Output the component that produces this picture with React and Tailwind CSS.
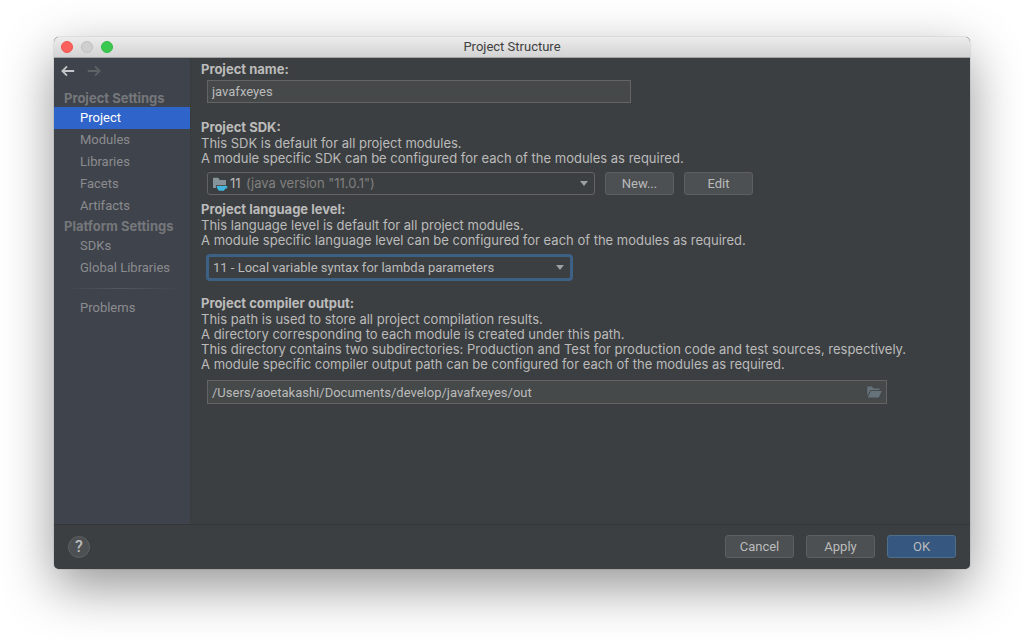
import React, { useState } from 'react';
import clsx from 'clsx';

const PROJECT_SETTINGS = ['Project', 'Modules', 'Libraries', 'Facets', 'Artifacts'];
const PLATFORM_SETTINGS = ['SDKs', 'Global Libraries'];

const ArrowIcon = ({ className }) => (
  <svg viewBox="0 0 14 12" className={clsx('h-3 w-3.5', className)} fill="none" stroke="currentColor" strokeWidth="1.8">
    <path d="M13.2 6H1.8M6 1.4 1.4 6 6 10.6" />
  </svg>
);

const ChevronIcon = ({ className }) => (
  <svg viewBox="0 0 8 5" className={clsx('pointer-events-none absolute h-[5px] w-2', className)} fill="#9da0a3">
    <path d="M0 0h8L4 5z" />
  </svg>
);

const SdkIcon = ({ className }) => (
  <svg viewBox="0 0 16 14" className={clsx('pointer-events-none absolute h-3.5 w-4', className)}>
    <path d="M1 .8h5.2L7.8 3H14v5.2H4V11H1z" fill="#87939a" />
    <path d="M4.6 9h10.6v2.6h-1.8c-.4.9-1 1.6-1.7 2.2H7.4C5.8 12.8 4.7 11.2 4.6 9z" fill="#40b6e0" />
  </svg>
);

const FolderOpenIcon = () => (
  <svg viewBox="0 0 15 12" className="h-3 w-[15px]" fill="#65727a">
    <path d="M.3 10V.6h4.6l1.6 1.8h6V4H3.4z" />
    <path d="M3.8 5h10.9l-2.900 6.400H.8z" />
  </svg>
);

const Button = ({ children, primary }) => (
  <button
    type="button"
    className={clsx(
      'h-[23px] w-[69px] rounded-[3px] border text-center leading-[15px]',
      primary ? 'border-[#4c708c] bg-[#365880]' : 'border-[#5e6060] bg-[#4c5052]'
    )}
  >
    {children}
  </button>
);

const NavItem = ({ name, active, onSelect }) => (
  <button
    type="button"
    onClick={() => onSelect(name)}
    className={clsx(
      'block h-[22px] w-full pl-[26px] text-left leading-[22px]',
      active ? 'bg-[#2f65ca] text-white' : 'text-[#8b8c8e]'
    )}
  >
    {name}
  </button>
);

const NavHeading = ({ children }) => (
  <h2 className="pl-2.5 font-['Inter',sans-serif] leading-[18px] font-bold text-[#75777a]">{children}</h2>
);

const Sidebar = () => {
  const [selected, setSelected] = useState('Project');

  const renderItem = (name) => (
    <NavItem key={name} name={name} active={selected === name} onSelect={setSelected} />
  );

  return (
    <nav className="w-[137px] shrink-0 border-r border-[#393b3d] bg-[#3f434c]">
      <div className="flex gap-3 px-[7px] pt-[7px] pb-3">
        <button type="button" aria-label="Back" className="text-[#c4c6c8]">
          <ArrowIcon />
        </button>
        <button type="button" aria-label="Forward" className="text-[#5f6266]">
          <ArrowIcon className="rotate-180" />
        </button>
      </div>
      <NavHeading>Project Settings</NavHeading>
      {PROJECT_SETTINGS.map(renderItem)}
      <NavHeading>Platform Settings</NavHeading>
      {PLATFORM_SETTINGS.map(renderItem)}
      <hr className="mx-2.5 mt-[9px] mb-2 h-px border-0 bg-linear-to-r from-transparent via-[#54575c] to-transparent" />
      {renderItem('Problems')}
    </nav>
  );
};

const FieldLabel = ({ htmlFor, children }) => (
  <label htmlFor={htmlFor} className="block font-['Inter',sans-serif] leading-[17px] font-bold">
    {children}
  </label>
);

const Description = ({ lines }) => (
  <div className="font-['Inter',sans-serif]">
    {lines.map((line) => (
      <p key={line}>{line}</p>
    ))}
  </div>
);

const ProjectForm = () => {
  const [name, setName] = useState('javafxeyes');
  const [output, setOutput] = useState('/Users/aoetakashi/Documents/develop/javafxeyes/out');

  return (
    <form className="min-w-0 flex-1 px-2.5 pt-[3px] leading-[15px]">
      <section>
        <FieldLabel htmlFor="name">Project name:</FieldLabel>
        <input
          id="name"
          type="text"
          value={name}
          onChange={(e) => setName(e.target.value)}
          className="mt-0.5 ml-1.5 block h-[23px] w-full max-w-[424px] border border-[#646464] bg-[#45494a] px-1 outline-none"
        />
      </section>

      <section className="mt-4">
        <FieldLabel htmlFor="sdk">Project SDK:</FieldLabel>
        <Description
          lines={[
            'This SDK is default for all project modules.',
            'A module specific SDK can be configured for each of the modules as required.',
          ]}
        />
        <div className="mt-1.5 ml-1.5 flex gap-2.5">
          <div className="relative w-full max-w-[388px] font-['Inter',sans-serif]">
            <SdkIcon className="top-[5px] left-[5px]" />
            <select
              id="sdk"
              className="h-[23px] w-full appearance-none rounded-[3px] border border-[#646464] bg-transparent pl-[22px] outline-none"
            >
              <option>11</option>
            </select>
            <span className="pointer-events-none absolute top-1 left-[39px] text-[#808080]">
              (java version "11.0.1")
            </span>
            <ChevronIcon className="top-[9px] right-[7px]" />
          </div>
          <Button>New...</Button>
          <Button>Edit</Button>
        </div>
      </section>

      <section className="mt-1.5">
        <FieldLabel htmlFor="level">Project language level:</FieldLabel>
        <Description
          lines={[
            'This language level is default for all project modules.',
            'A module specific language level can be configured for each of the modules as required.',
          ]}
        />
        <div className="relative mt-1.5 ml-[5px] w-full max-w-[367px]">
          <select
            id="level"
            className="block h-[27px] w-full appearance-none rounded-[4px] border-[3px] border-[#3d6185] bg-transparent pl-1 outline-none"
          >
            <option>11 - Local variable syntax for lambda parameters</option>
          </select>
          <ChevronIcon className="top-[11px] right-[9px]" />
        </div>
      </section>

      <section className="mt-3.5">
        <FieldLabel htmlFor="output">Project compiler output:</FieldLabel>
        <Description
          lines={[
            'This path is used to store all project compilation results.',
            'A directory corresponding to each module is created under this path.',
            'This directory contains two subdirectories: Production and Test for production code and test sources, respectively.',
            'A module specific compiler output path can be configured for each of the modules as required.',
          ]}
        />
        <div className="mt-2 ml-1.5 flex h-6 max-w-[680px] items-center border border-[#646464] bg-[#45494a] px-1">
          <input
            id="output"
            type="text"
            value={output}
            onChange={(e) => setOutput(e.target.value)}
            className="min-w-0 flex-1 outline-none"
          />
          <button type="button" aria-label="Browse">
            <FolderOpenIcon />
          </button>
        </div>
      </section>
    </form>
  );
};

export default function App() {
  return (
    <div className="flex min-h-screen flex-col bg-white px-[54px] pt-[37px] pb-[71px] font-['Roboto',sans-serif] text-[13px] text-[#bbbbbb]">
      <div className="flex flex-1 flex-col overflow-hidden rounded-[5px] bg-[#3c3f41] shadow-[0_0_1px_rgba(0,0,0,0.6),0_18px_52px_rgba(0,0,0,0.42)]">
        <header className="grid h-[21px] grid-cols-3 items-center border-b border-[#a5a5a5] bg-linear-to-b from-[#ececec] to-[#d3d3d3] px-[7px]">
          <div className="flex gap-2">
            <button type="button" aria-label="Close" className="size-3 rounded-full border border-[#f0544f] bg-[#fc605c]" />
            <button type="button" aria-label="Minimize" className="size-3 rounded-full border border-[#bfbfbf] bg-[#cfcfcf]" />
            <button type="button" aria-label="Zoom" className="size-3 rounded-full border border-[#35b947] bg-[#3ac94e]" />
          </div>
          <h1 className="text-center leading-4 text-[#404040]">Project Structure</h1>
        </header>

        <div className="flex flex-1">
          <Sidebar />
          <ProjectForm />
        </div>

        <footer className="flex items-center border-t border-[#333537] px-3.5 pt-2.5 pb-[11px]">
          <button
            type="button"
            aria-label="Help"
            className="size-[22px] rounded-full border border-[#5e6060] bg-[#4c5052] text-base leading-5 font-medium"
          >
            ?
          </button>
          <div className="ml-auto flex gap-3">
            <Button>Cancel</Button>
            <Button>Apply</Button>
            <Button primary>OK</Button>
          </div>
        </footer>
      </div>
    </div>
  );
}
